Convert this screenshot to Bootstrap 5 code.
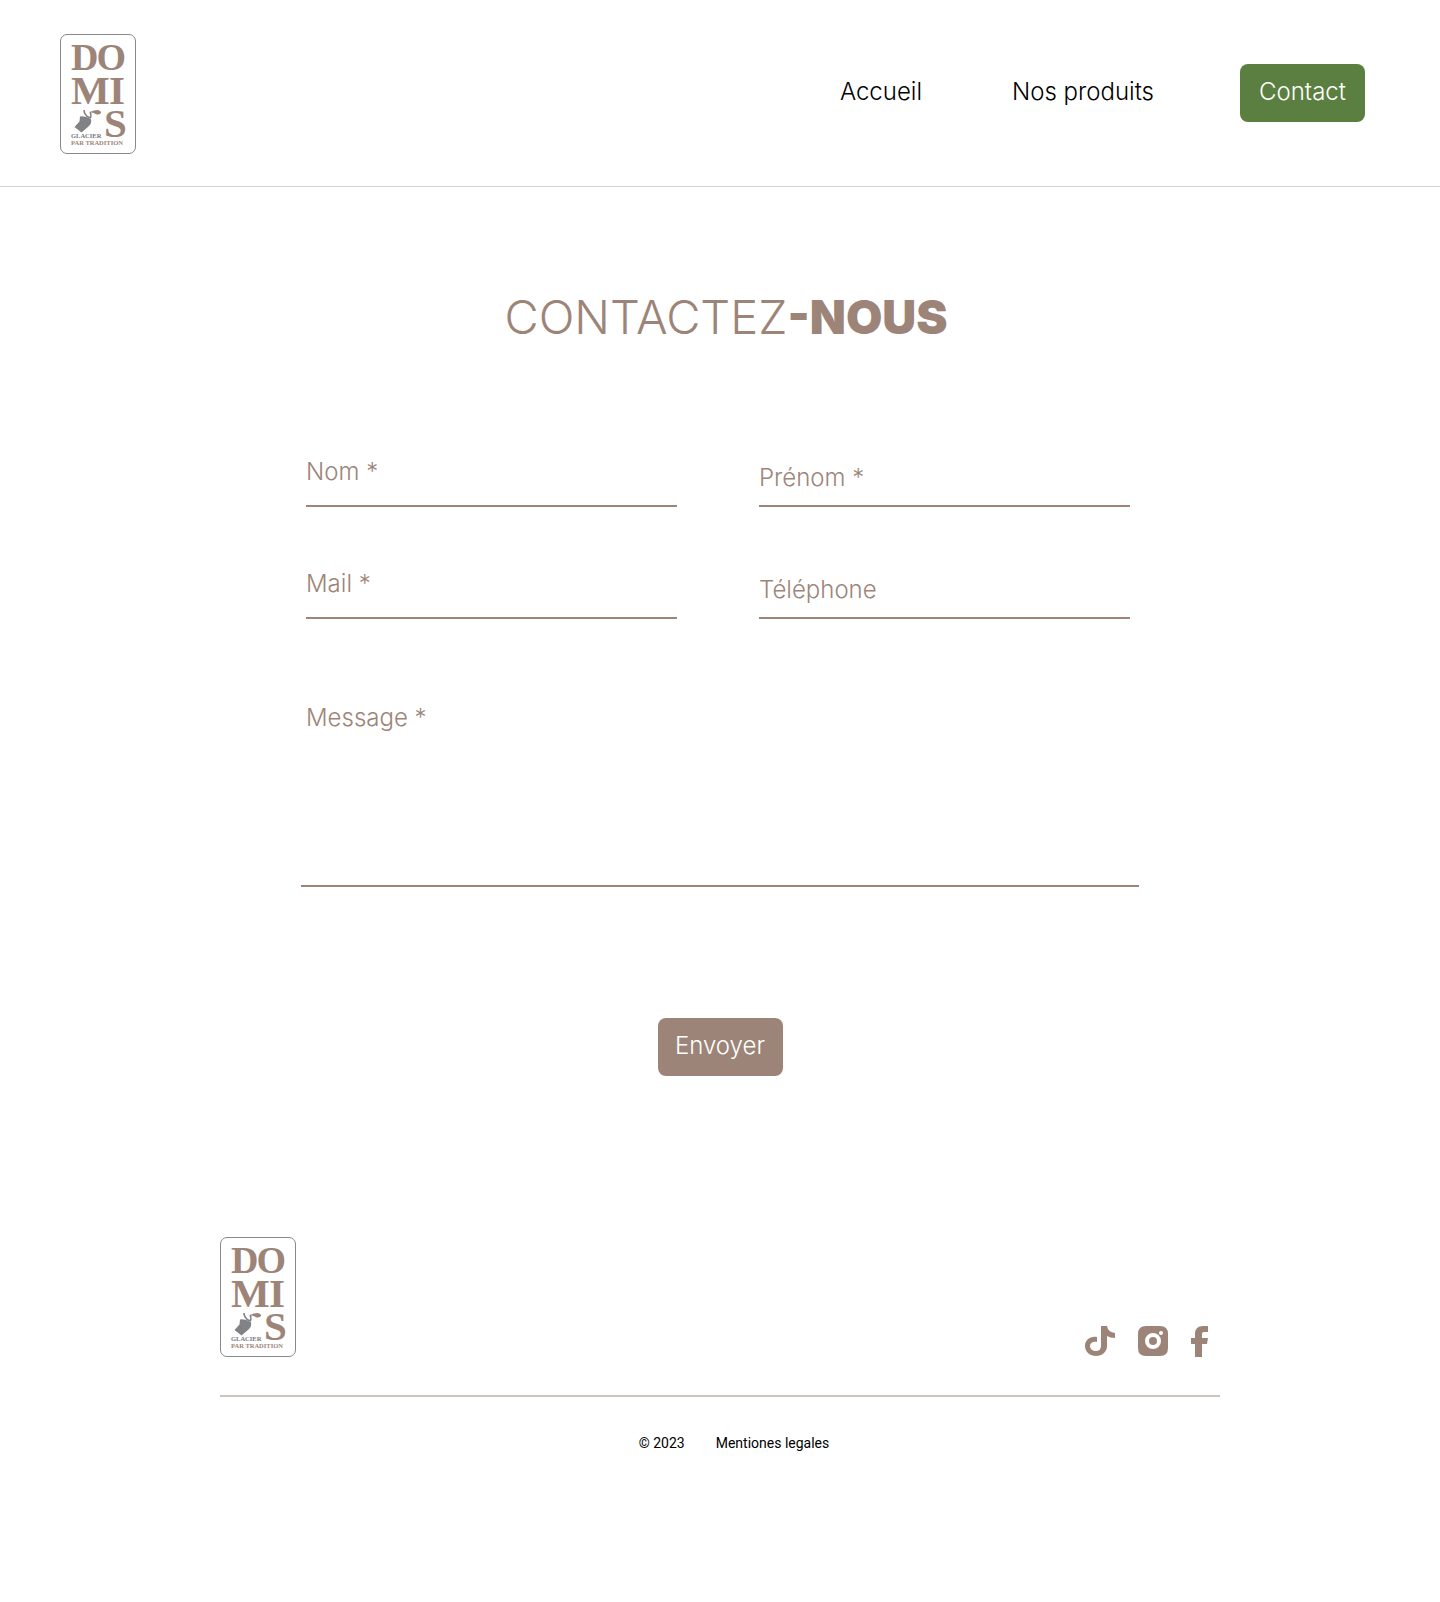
<!DOCTYPE html>
<html lang="fr">
<head>
<meta charset="utf-8">
<meta name="viewport" content="width=device-width, initial-scale=1">
<title>Domi's – Contact</title>
<link href="https://cdn.jsdelivr.net/npm/bootstrap@5.3.0/dist/css/bootstrap.min.css" rel="stylesheet">
<style>
:root { --taupe: #9c8578; --leaf: #5a7f40; }
body { font-family: Inter, "Liberation Sans", sans-serif; font-weight: 300; font-size: 24px; line-height: 32px; color: #000; background: #fff; }
.site-header { padding: 34px 75px 32px 60px; border-bottom: 1px solid #d2d2d2; }
.brand-logo { display: block; width: 76px; height: 120px; }
.brand-logo text { font-family: "Liberation Serif", serif; font-weight: 700; fill: var(--taupe); }
.brand-logo .tagline { font-size: 13px; }
.brand-logo .tagline-grey { fill: #77787c; }
.main-nav { gap: 86px; padding-bottom: 2px; }
.main-nav .nav-link { color: #000; padding: 12px 0 14px; font-weight: 350; }
.cta { --bs-btn-color: #fff; --bs-btn-hover-color: #fff; --bs-btn-border-width: 0; --bs-btn-border-radius: 8px; --bs-btn-font-size: 24px; --bs-btn-line-height: 32px; --bs-btn-font-weight: 300; --bs-btn-padding-x: 0; width: 125px; padding-top: 12px; padding-bottom: 14px; }
.cta-leaf { --bs-btn-bg: var(--leaf); --bs-btn-hover-bg: #4b6d34; }
.cta-taupe { --bs-btn-bg: var(--taupe); --bs-btn-hover-bg: #87715f; }
.page-title { margin: 100px 0 0 12px; font-size: 47px; line-height: 60px; font-weight: 300; color: var(--taupe); }
.page-title strong { font-weight: 900; }
.contact-form { max-width: 838px; margin: 105px auto 0; }
.field-grid { padding: 0 9px 0 5px; }
.field-grid .row { --bs-gutter-x: 82px; --bs-gutter-y: 57px; }
.line-field { border-bottom: 2px solid var(--taupe); padding: 10px 0 11px; gap: 8px; color: var(--taupe); }
.line-field.raised { padding: 4px 0 17px; }
.line-field .form-control { flex: 1; min-width: 0; border: 0; border-radius: 0; padding: 0; font: inherit; color: inherit; background: transparent; box-shadow: none; resize: none; }
.line-field:focus-within { border-color: var(--leaf); }
.message-field { height: 190px; margin-top: 78px; padding: 5px; }
.send-row { margin-top: 131px; }
.site-footer { max-width: 1000px; margin: 161px auto 0; padding-bottom: 140px; }
.footer-top { padding: 0 11px 38px 0; border-bottom: 2px solid #cfc4bc; }
.socials { gap: 23px; }
.socials a { display: block; }
.socials svg { display: block; fill: var(--taupe); height: 31px; }
.legal { gap: 31px; margin: 35px 0 0 28px; font: 400 14px/22px Roboto, "Liberation Sans", sans-serif; }
</style>
<script src="https://cdn.jsdelivr.net/npm/bootstrap@5.3.0/dist/js/bootstrap.bundle.min.js" defer></script>
</head>
<body>
<header class="site-header d-flex justify-content-between align-items-center">
  <a href="#" aria-label="Domi's, accueil"><svg class="brand-logo" viewBox="0 0 152 240">
    <rect x="1" y="1" width="150" height="238" rx="13" fill="#fff" stroke="#86888c" stroke-width="2"/>
    <text font-size="76" y="71"><tspan x="22">D</tspan><tspan x="73">O</tspan></text>
    <text font-size="82" y="139"><tspan x="22">M</tspan><tspan x="98">I</tspan></text>
    <text font-size="82" x="88" y="206">S</text>
    <text class="tagline tagline-grey" x="22" y="207">GLACIER</text>
    <text class="tagline" x="22" y="222">PAR TRADITION</text>
    <path fill="#808286" d="M40 165Q49 163 62 170 64 180 57 185L43 197 29 186 39 175Z"/>
    <path fill="none" stroke="#808286" stroke-width="3" d="M48 152q0 8 6 12M60 156q3 4 1 12M52 164l9 4"/>
    <path fill="#9c8578" d="M60 156Q68 152 75 152 83 154 82 158 77 163 71 160 67 156 60 157Z"/>
  </svg></a>
  <nav class="main-nav nav align-items-center">
    <a class="nav-link me-1" href="#">Accueil</a>
    <a class="nav-link" href="#">Nos produits</a>
    <a class="btn cta cta-leaf" href="#">Contact</a>
  </nav>
</header>

<main>
  <h1 class="page-title text-center">CONTACTEZ<strong>-NOUS</strong></h1>
  <form class="contact-form">
    <div class="field-grid">
      <div class="row row-cols-2">
        <div class="col"><div class="line-field raised d-flex"><label for="nom">Nom *</label><input class="form-control" id="nom" required></div></div>
        <div class="col"><div class="line-field d-flex"><label for="prenom">Prénom *</label><input class="form-control" id="prenom" required></div></div>
        <div class="col"><div class="line-field raised d-flex"><label for="mail">Mail *</label><input type="email" class="form-control" id="mail" required></div></div>
        <div class="col"><div class="line-field d-flex"><label for="tel">Téléphone</label><input type="tel" class="form-control" id="tel"></div></div>
      </div>
    </div>
    <div class="line-field message-field d-flex"><label for="message">Message *</label><textarea class="form-control" id="message" required></textarea></div>
    <div class="send-row text-center"><button type="submit" class="btn cta cta-taupe">Envoyer</button></div>
  </form>
</main>

<footer class="site-footer">
  <div class="footer-top d-flex justify-content-between align-items-end">
    <a href="#" aria-label="Domi's"><svg class="brand-logo" viewBox="0 0 152 240">
      <rect x="1" y="1" width="150" height="238" rx="13" fill="#fff" stroke="#86888c" stroke-width="2"/>
      <text font-size="76" y="71"><tspan x="22">D</tspan><tspan x="73">O</tspan></text>
      <text font-size="82" y="139"><tspan x="22">M</tspan><tspan x="98">I</tspan></text>
      <text font-size="82" x="88" y="206">S</text>
      <text class="tagline tagline-grey" x="22" y="207">GLACIER</text>
      <text class="tagline" x="22" y="222">PAR TRADITION</text>
      <path fill="#808286" d="M40 165Q49 163 62 170 64 180 57 185L43 197 29 186 39 175Z"/>
      <path fill="none" stroke="#808286" stroke-width="3" d="M48 152q0 8 6 12M60 156q3 4 1 12M52 164l9 4"/>
      <path fill="#9c8578" d="M60 156Q68 152 75 152 83 154 82 158 77 163 71 160 67 156 60 157Z"/>
    </svg></a>
    <div class="socials d-flex">
      <a href="#" aria-label="TikTok"><svg width="30" viewBox="0 0 30 31"><path d="M16 0h6q1 6 8 7v5q-5 0-8-2v10c0 6-5 10-11 10S0 26 0 20s5-10 12-9v5c-4-1-7 1-7 4s3 5 6 5 5-2 5-5Z"/></svg></a>
      <a href="#" aria-label="Instagram"><svg width="30" viewBox="0 0 30 31"><path fill-rule="evenodd" d="M8 0h14q8 0 8 8v14q0 8-8 8H8q-8 0-8-8V8q0-8 8-8Zm7 7a8 8 0 1 0 0 16 8 8 0 0 0 0-16Zm0 4a4 4 0 1 1 0 8 4 4 0 0 1 0-8Zm8-6a2 2 0 1 0 0 4 2 2 0 0 0 0-4Z"/></svg></a>
      <a href="#" aria-label="Facebook"><svg width="18" viewBox="0 0 18 31"><path d="M17 0v6h-4q-2 0-2 2v4h6l-1 6h-5v13H4V18H0v-6h4V8q0-8 8-8Z"/></svg></a>
    </div>
  </div>
  <div class="legal d-flex justify-content-center">
    <span>© 2023</span>
    <a class="text-black text-decoration-none" href="#">Mentiones legales</a>
  </div>
</footer>
</body>
</html>
